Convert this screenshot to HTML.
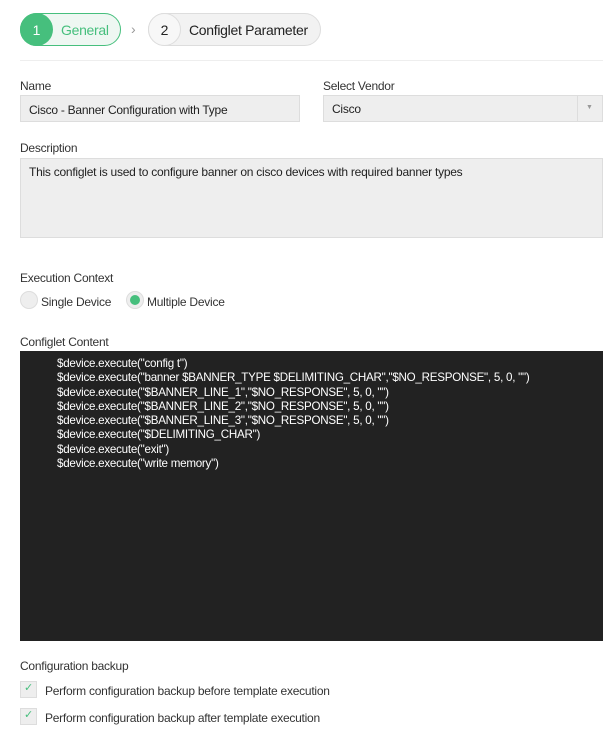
<!DOCTYPE html>
<html><head><meta charset="utf-8"><style>
body{margin:0;width:613px;height:740px;background:#fff;font-family:"Liberation Sans",sans-serif;font-size:12px;color:#333;position:relative;overflow:hidden}
.a{position:absolute}
.lbl{font-size:12px;color:#333;letter-spacing:-0.25px}
.inp{background:#eee;border:1px solid #ddd;box-sizing:border-box;font-size:12px;letter-spacing:-0.25px;color:#222}
.code{background:#222;color:#fff;font-size:11.6px;letter-spacing:-0.25px;line-height:14.3px;padding:6px 0 0 37px;box-sizing:border-box;white-space:pre}
.cb{width:17px;height:17px;background:#eee;border:1px solid #ddd;box-sizing:border-box}
</style></head><body>
<div class="a" style="left:20px;top:13px;width:101px;height:33px;border:1px solid #46bf7d;border-radius:17px;box-sizing:border-box;background:#eef7f2"></div>
<div class="a" style="left:20px;top:13px;width:33px;height:33px;border-radius:50%;background:#46bf7d;color:#fff;font-size:14px;line-height:34px;text-align:center">1</div>
<div class="a" style="left:61px;top:22px;font-size:14px;color:#46bf7d;letter-spacing:-0.3px">General</div>
<div class="a" style="left:131px;top:21px;font-size:14px;color:#999">&#8250;</div>
<div class="a" style="left:148px;top:13px;width:173px;height:33px;border:1px solid #ddd;border-radius:17px;box-sizing:border-box;background:#f2f2f2"></div>
<div class="a" style="left:148px;top:13px;width:33px;height:33px;border-radius:50%;border:1px solid #ddd;box-sizing:border-box;background:#f7f7f7;font-size:14px;line-height:32px;text-align:center;color:#222">2</div>
<div class="a" style="left:189px;top:22px;font-size:14px;color:#222;letter-spacing:-0.3px">Configlet Parameter</div>
<div class="a" style="left:20px;top:60px;width:583px;height:1px;background:#eee"></div>
<div class="a lbl" style="left:20px;top:79px">Name</div>
<div class="a inp" style="left:20px;top:95px;width:280px;height:27px;padding:7px 0 0 8px">Cisco - Banner Configuration with Type</div>
<div class="a lbl" style="left:323px;top:79px">Select Vendor</div>
<div class="a inp" style="left:323px;top:95px;width:280px;height:27px;padding:6px 0 0 8px">Cisco</div>
<div class="a" style="left:577px;top:96px;width:1px;height:25px;background:#ddd"></div>
<div class="a" style="left:586px;top:104px;font-size:7px;color:#999">&#9660;</div>
<div class="a lbl" style="left:20px;top:141px">Description</div>
<div class="a inp" style="left:20px;top:158px;width:583px;height:80px;padding:6px 0 0 8px">This configlet is used to configure banner on cisco devices with required banner types</div>
<div class="a lbl" style="left:20px;top:271px">Execution Context</div>
<div class="a" style="left:20px;top:291px;width:18px;height:18px;border-radius:50%;background:#eee;border:1px solid #ddd;box-sizing:border-box"></div>
<div class="a lbl" style="left:41px;top:295px">Single Device</div>
<div class="a" style="left:126px;top:291px;width:18px;height:18px;border-radius:50%;background:#eee;border:1px solid #ddd;box-sizing:border-box"></div>
<div class="a" style="left:130px;top:295px;width:10px;height:10px;border-radius:50%;background:#46bf7d"></div>
<div class="a lbl" style="left:147px;top:295px">Multiple Device</div>
<div class="a lbl" style="left:20px;top:335px">Configlet Content</div>
<div class="a code" style="left:20px;top:351px;width:583px;height:290px">$device.execute("config t")
$device.execute("banner $BANNER_TYPE $DELIMITING_CHAR","$NO_RESPONSE", 5, 0, "")
$device.execute("$BANNER_LINE_1","$NO_RESPONSE", 5, 0, "")
$device.execute("$BANNER_LINE_2","$NO_RESPONSE", 5, 0, "")
$device.execute("$BANNER_LINE_3","$NO_RESPONSE", 5, 0, "")
$device.execute("$DELIMITING_CHAR")
$device.execute("exit")
$device.execute("write memory")</div>
<div class="a lbl" style="left:20px;top:659px">Configuration backup</div>
<div class="a cb" style="left:20px;top:681px"></div>
<div class="a" style="left:24px;top:681px;font-size:11px;color:#46bf7d">&#10003;</div>
<div class="a lbl" style="left:45px;top:684px">Perform configuration backup before template execution</div>
<div class="a cb" style="left:20px;top:708px"></div>
<div class="a" style="left:24px;top:708px;font-size:11px;color:#46bf7d">&#10003;</div>
<div class="a lbl" style="left:45px;top:711px">Perform configuration backup after template execution</div>
</body></html>
